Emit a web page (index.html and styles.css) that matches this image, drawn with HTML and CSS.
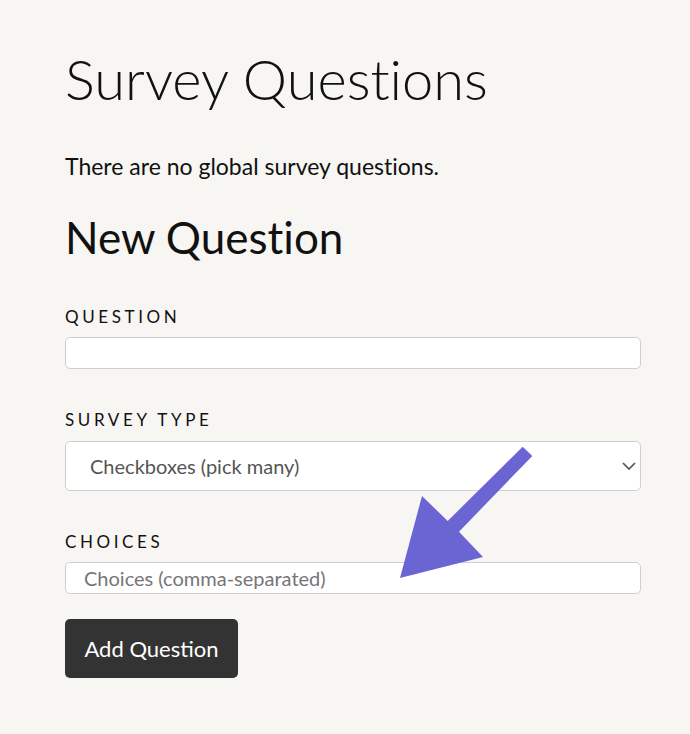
FILE: index.html
```html
<!DOCTYPE html>
<html>
<head>
<meta charset="utf-8">
<link rel="stylesheet" href="styles.css">
</head>
<body>
<main class="page">
  <h1 class="title">Survey Questions</h1>
  <p class="note">There are no global survey questions.</p>
  <h2 class="subtitle">New Question</h2>
  <form class="form">
    <div class="field">
      <label class="label">Question</label>
      <input class="input" type="text">
    </div>
    <div class="field">
      <label class="label">Survey Type</label>
      <div class="select-wrap">
        <select class="select">
          <option>Checkboxes (pick many)</option>
        </select>
        <svg class="chevron" width="14" height="8" viewBox="0 0 14 8"><path d="M1 1 L7 7 L13 1" fill="none" stroke="#555" stroke-width="1.7"/></svg>
      </div>
    </div>
    <div class="field">
      <label class="label">Choices</label>
      <input class="input" type="text" placeholder="Choices (comma-separated)">
    </div>
    <button class="button" type="button">Add Question</button>
  </form>
</main>
<svg class="arrow" width="690" height="734" viewBox="0 0 690 734"><polygon points="522.7,446.7 532.3,456 459,531.7 483,557 400,578 422,496 447.7,521" fill="#6b65d4"/></svg>
</body>
</html>
```
FILE: styles.css
```css
html, body {
  margin: 0;
  padding: 0;
  background: #f7f6f3;
}
body {
  font-family: Lato, "Noto Sans", sans-serif;
  font-variant-ligatures: none;
  color: #111;
}
.page {
  padding: 45px 49px 40px 65px;
}
.title {
  font-size: 56px;
  font-weight: 300;
  line-height: 1.2;
  margin: 0;
}
.note {
  font-size: 23px;
  line-height: 30px;
  margin: 39px 0 0;
}
.subtitle {
  font-size: 44px;
  font-weight: 400;
  line-height: 1.2;
  margin: 30px 0 0;
}
.form {
  display: flex;
  flex-direction: column;
  margin-top: 43px;
}
.field {
  display: flex;
  flex-direction: column;
  margin-bottom: 41px;
}
.field:last-of-type {
  margin-bottom: 25px;
}
.label {
  font-size: 17px;
  line-height: 20px;
  text-transform: uppercase;
  letter-spacing: 3.6px;
  color: #111;
  margin-bottom: 10px;
}
.input {
  box-sizing: border-box;
  height: 32px;
  width: 100%;
  border: 1px solid #cfcfcf;
  border-radius: 5px;
  background: #fff;
  font-family: inherit;
  font-size: 20px;
  padding: 0 18px;
  color: #333;
}
.input::placeholder {
  color: #757679;
}
.select-wrap {
  position: relative;
  margin-top: 1px;
}
.select {
  appearance: none;
  -webkit-appearance: none;
  box-sizing: border-box;
  width: 100%;
  height: 50px;
  border: 1px solid #cfcfcf;
  border-radius: 5px;
  background: #fff;
  font-family: inherit;
  font-size: 20px;
  color: #555;
  padding: 0 24px;
}
.chevron {
  position: absolute;
  right: 5px;
  top: 21px;
}
.button {
  align-self: flex-start;
  width: 173px;
  height: 59px;
  background: #333;
  color: #fff;
  border: none;
  border-radius: 5px;
  font-family: inherit;
  font-size: 22px;
}
.arrow {
  position: absolute;
  left: 0;
  top: 0;
  pointer-events: none;
}
```
